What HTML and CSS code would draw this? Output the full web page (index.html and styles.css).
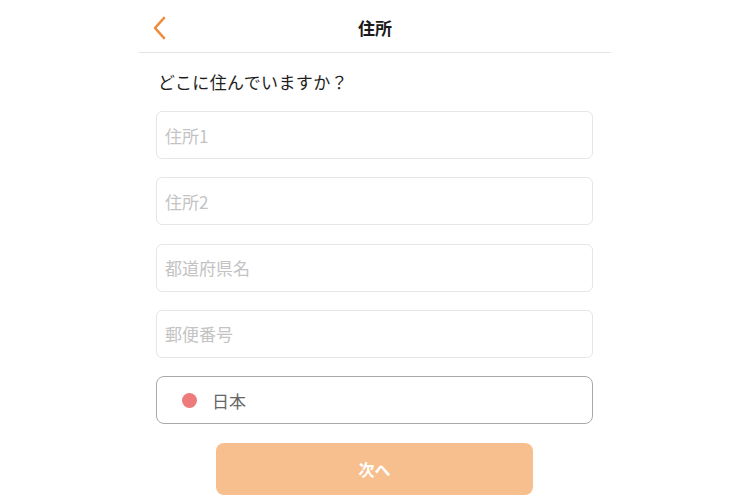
FILE: index.html
```html
<!DOCTYPE html>
<html lang="ja">
<head>
<meta charset="utf-8">
<title>住所</title>
<link rel="stylesheet" href="styles.css">
</head>
<body>
<div class="screen">
  <header class="header">
    <button class="back" aria-label="戻る">
      <svg width="14" height="24" viewBox="0 0 14 24"><path d="M12 2 L3 12 L12 22" fill="none" stroke="#ef8a34" stroke-width="2.6" stroke-linecap="round" stroke-linejoin="round"/></svg>
    </button>
    <h1 class="title">住所</h1>
    <span class="spacer"></span>
  </header>
  <main class="content">
    <p class="question">どこに住んでいますか？</p>
    <form class="form">
      <input class="field" type="text" placeholder="住所1">
      <input class="field" type="text" placeholder="住所2">
      <input class="field" type="text" placeholder="都道府県名">
      <input class="field" type="text" placeholder="郵便番号">
      <div class="country">
        <span class="dot"></span>
        <span class="country-name">日本</span>
      </div>
      <button type="button" class="next">次へ</button>
    </form>
  </main>
</div>
</body>
</html>
```
FILE: styles.css
```css
* { box-sizing: border-box; }
html, body { margin: 0; padding: 0; background: #ffffff; }
body {
  font-family: "Noto Sans CJK JP", "Noto Sans", sans-serif;
  color: #222;
}
.screen {
  width: 472px;
  margin: 0 auto;
}
.header {
  height: 53px;
  border-bottom: 1px solid #e2e2e2;
  display: flex;
  align-items: center;
  justify-content: space-between;
  padding: 4px 8px 0 8px;
}
.back {
  width: 24px;
  height: 30px;
  padding: 0;
  border: 0;
  background: none;
  display: flex;
  align-items: center;
  justify-content: center;
}
.spacer { width: 24px; }
.title {
  margin: 0;
  font-size: 17px;
  font-weight: 700;
  color: #1a1a1a;
  line-height: 24px;
}
.content {
  padding: 0 18px 0 17px;
}
.question {
  margin: 17px 0 0 2px;
  font-size: 17px;
  line-height: 24px;
  color: #1e1e1e;
  letter-spacing: 0.4px;
}
.form {
  display: flex;
  flex-direction: column;
  align-items: center;
  margin-top: 17px;
}
.field {
  display: block;
  width: 100%;
  height: 48px;
  margin: 0 0 18.25px 0;
  border: 1px solid #e6e6e6;
  border-radius: 6px;
  padding: 0 8px;
  font-family: inherit;
  font-size: 17px;
  color: #333;
  outline: none;
  background: #fff;
  -webkit-appearance: none;
  appearance: none;
}
.field::placeholder { color: #c3c3c3; }
.country {
  width: 100%;
  height: 48px;
  border: 1px solid #a9a9a9;
  border-radius: 8px;
  display: flex;
  align-items: center;
  padding-left: 25px;
  gap: 15px;
}
.dot {
  width: 15px;
  height: 15px;
  border-radius: 50%;
  background: #ee7b7c;
}
.country-name {
  font-size: 17px;
  color: #666;
}
.next {
  margin-top: 19px;
  width: 317px;
  height: 52px;
  border: 0;
  border-radius: 8px;
  background: #f8bf8e;
  color: #ffffff;
  font-family: inherit;
  font-size: 16px;
  font-weight: 700;
}
```
